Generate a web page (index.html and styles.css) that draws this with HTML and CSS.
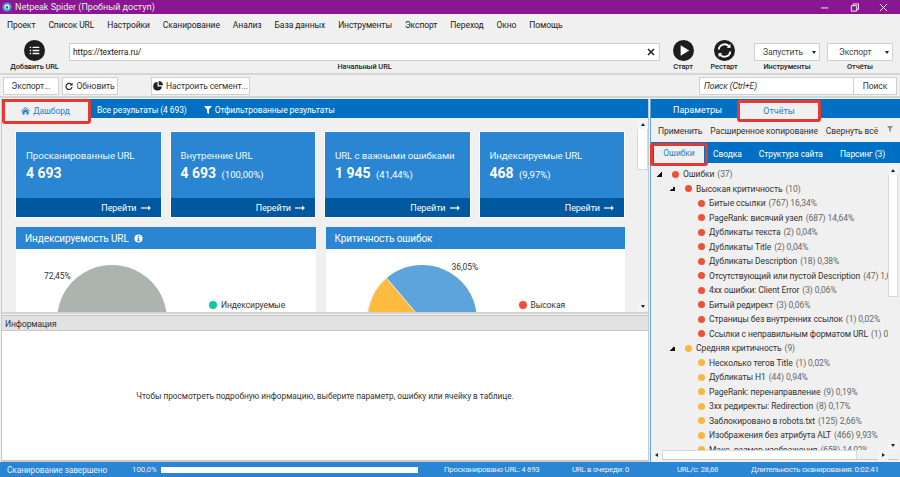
FILE: index.html
```html
<!DOCTYPE html>
<html lang="ru">
<head>
<meta charset="utf-8">
<title>Netpeak Spider</title>
<link rel="stylesheet" href="styles.css">
</head>
<body>
<div class="app">
  <header class="titlebar">
    <svg class="logo" viewBox="0 0 12 12"><circle cx="6" cy="6" r="5.5" fill="#35a5cf"/><circle cx="6" cy="6" r="3" fill="#fff"/><circle cx="6" cy="6.5" r="1.6" fill="#1c6f99"/></svg>
    <span class="title-text">Netpeak Spider (Пробный доступ)</span>
    <div class="win-btns">
      <svg class="win" viewBox="0 0 10 10"><path d="M0 5.5h8" stroke="#fff" fill="none"/></svg>
      <svg class="win" viewBox="0 0 10 10"><path d="M1.5 3h6v6h-6zM3.5 3V1h6v6h-2" stroke="#fff" fill="none"/></svg>
      <svg class="win" viewBox="0 0 10 10"><path d="M1 1l8 8M9 1l-8 8" stroke="#fff" fill="none"/></svg>
    </div>
  </header>
  <nav class="menu">
    <span>Проект</span><span>Список URL</span><span>Настройки</span><span>Сканирование</span><span>Анализ</span><span>База данных</span><span>Инструменты</span><span>Экспорт</span><span>Переход</span><span>Окно</span><span>Помощь</span>
  </nav>
  <section class="toolbar">
    <div class="tool tool-add">
      <svg class="round" viewBox="0 0 22 22"><circle cx="11" cy="11" r="11" fill="#1d1d1d"/><path d="M6 7h1.500v1.500H6zM9 7h7v1.500H9zM6 10.200h1.500v1.500H6zM9 10.200h7v1.500H9zM6 13.400h1.500v1.500H6zM9 13.400h7v1.500H9z" fill="#fff"/></svg>
      <span class="tool-label">Добавить URL</span>
    </div>
    <div class="tool tool-url">
      <div class="url-box"><span>https://texterra.ru/</span><svg class="clear" viewBox="0 0 8 8"><path d="M1 1l6 6M7 1l-6 6" stroke="#222" stroke-width="1.500" fill="none"/></svg></div>
      <span class="tool-label">Начальный URL</span>
    </div>
    <div class="tool tool-start">
      <svg class="round" viewBox="0 0 22 22"><circle cx="11" cy="11" r="11" fill="#1d1d1d"/><path d="M8 5.500l9 5.500-9 5.500z" fill="#fff"/></svg>
      <span class="tool-label">Старт</span>
    </div>
    <div class="tool tool-restart">
      <svg class="round" viewBox="0 0 22 22"><circle cx="11" cy="11" r="11" fill="#1d1d1d"/><path d="M5 10a6 6 0 0 1 10.500-3.500M17 12a6 6 0 0 1-10.500 3.500" stroke="#fff" stroke-width="2" fill="none"/><path d="M13.500 8.500l4-.5-.5-4zM8.500 13.500l-4 .5.500 4z" fill="#fff"/></svg>
      <span class="tool-label">Рестарт</span>
    </div>
    <div class="tool tool-drop">
      <div class="drop"><span>Запустить</span><i class="caret"></i></div>
      <span class="tool-label">Инструменты</span>
    </div>
    <div class="tool tool-drop tool-export">
      <div class="drop"><span>Экспорт</span><i class="caret"></i></div>
      <span class="tool-label">Отчёты</span>
    </div>
  </section>
  <section class="actions">
    <button class="btn btn-export">Экспорт...</button>
    <button class="btn btn-refresh"><svg class="ico" viewBox="0 0 10 10"><path d="M8.300 3.500A3.800 3.800 0 1 0 8.800 6.500" stroke="#222" stroke-width="1.500" fill="none"/><path d="M9.500 .8v3.700H5.800z" fill="#222"/></svg>Обновить</button>
    <button class="btn btn-segment"><svg class="ico ico-pie" viewBox="0 0 10 10"><path d="M4.500 1a4.300 4.300 0 1 0 4.300 4.500H4.500z" fill="#222"/><path d="M5.700 0a4.300 4.300 0 0 1 4.300 4.300H5.700z" fill="#222"/></svg>Настроить сегмент...</button>
    <div class="search"><span class="search-input">Поиск (Ctrl+E)</span><span class="search-btn">Поиск</span></div>
  </section>
  <main class="main">
    <section class="left">
      <div class="tabs">
        <span class="tab tab-dash"><svg class="home" viewBox="0 0 10 10"><path d="M5 1L0 5.200l.6.700L5 2.300l4.400 3.600.6-.7zM1.500 6v3.500h2.500V7h2v2.500h2.500V6L5 3.200z" fill="#2a7fc9"/></svg>Дашборд</span>
        <span class="tab tab-all">Все результаты (4 693)</span>
        <span class="tab tab-filter"><svg class="funnel" viewBox="0 0 8 8"><path d="M0 0h8L5 3.500V8L3 6.500v-3z" fill="#fff"/></svg>Отфильтрованные результаты</span>
      </div>
      <div class="dash-wrap">
        <div class="dash">
          <div class="cards">
            <article class="card">
              <div class="card-body"><div class="card-title">Просканированные URL</div><div class="card-num">4 693</div></div>
              <div class="card-foot">Перейти <svg class="arrow" viewBox="0 0 10 6"><path d="M0 3h8" stroke="#fff" stroke-width="1.200"/><path d="M7 .5L10 3 7 5.500z" fill="#fff"/></svg></div>
            </article>
            <article class="card">
              <div class="card-body"><div class="card-title">Внутренние URL</div><div class="card-num">4 693 <small>(100,00%)</small></div></div>
              <div class="card-foot">Перейти <svg class="arrow" viewBox="0 0 10 6"><path d="M0 3h8" stroke="#fff" stroke-width="1.200"/><path d="M7 .5L10 3 7 5.500z" fill="#fff"/></svg></div>
            </article>
            <article class="card">
              <div class="card-body"><div class="card-title">URL с важными ошибками</div><div class="card-num">1 945 <small>(41,44%)</small></div></div>
              <div class="card-foot">Перейти <svg class="arrow" viewBox="0 0 10 6"><path d="M0 3h8" stroke="#fff" stroke-width="1.200"/><path d="M7 .5L10 3 7 5.500z" fill="#fff"/></svg></div>
            </article>
            <article class="card">
              <div class="card-body"><div class="card-title">Индексируемые URL</div><div class="card-num">468 <small>(9,97%)</small></div></div>
              <div class="card-foot">Перейти <svg class="arrow" viewBox="0 0 10 6"><path d="M0 3h8" stroke="#fff" stroke-width="1.200"/><path d="M7 .5L10 3 7 5.500z" fill="#fff"/></svg></div>
            </article>
          </div>
          <div class="charts">
            <article class="chart">
              <div class="chart-head">Индексируемость URL <svg class="info-ico" viewBox="0 0 10 10"><circle cx="5" cy="5" r="4.500" fill="#fff"/><path d="M4.200 2h1.600v1.400H4.200zM3.800 4.200h2v2.800h.6v1H3.700v-1h.6V5.200h-.5z" fill="#2a86d2"/></svg></div>
              <div class="chart-body">
                <div class="pie-area">
                  <span class="pct pct-a">72,45%</span>
                  <svg class="pie pie-a" viewBox="0 0 110 110"><circle cx="55" cy="55" r="55" fill="#adb4b0"/></svg>
                </div>
                <div class="legend"><i class="dot dot-green"></i>Индексируемые</div>
              </div>
            </article>
            <article class="chart">
              <div class="chart-head">Критичность ошибок</div>
              <div class="chart-body">
                <div class="pie-area">
                  <span class="pct pct-b">36,05%</span>
                  <svg class="pie pie-b" viewBox="0 0 110 110"><circle cx="55" cy="55" r="55" fill="#5da3dc"/><path d="M55 55L19.500 13A55 55 0 0 0 0 55v55h55z" fill="#ffbb40" stroke="#fff" stroke-width=".8"/></svg>
                </div>
                <div class="legend"><i class="dot dot-red"></i>Высокая</div>
              </div>
            </article>
          </div>
        </div>
        <div class="vscroll vscroll-dash"><span class="sb-btn"><i class="tri-up"></i></span><span class="sb-thumb"></span><span class="sb-fill"></span><span class="sb-btn"><i class="tri-down"></i></span></div>
      </div>
      <div class="info">
        <div class="info-head">Информация</div>
        <div class="info-body">Чтобы просмотреть подробную информацию, выберите параметр, ошибку или ячейку в таблице.</div>
      </div>
    </section>
    <aside class="right">
      <div class="rtabs">
        <span class="rtab">Параметры</span>
        <span class="rtab rtab-active">Отчёты</span>
      </div>
      <div class="rtools">
        <span>Применить</span><span>Расширенное копирование</span><span>Свернуть всё</span>
        <svg class="rfunnel" viewBox="0 0 8 8"><path d="M0 0h8L5 3.500V8L3 6.500v-3z" fill="#8a8a8a"/></svg>
      </div>
      <div class="subtabs">
        <span class="subtab subtab-active">Ошибки</span>
        <span class="subtab">Сводка</span>
        <span class="subtab">Структура сайта</span>
        <span class="subtab">Парсинг (3)</span>
      </div>
      <div class="tree-wrap">
        <div class="tree-main">
          <ul class="tree">
            <li class="lv0"><i class="exp"></i><i class="dot dot-red"></i>Ошибки <em>(37)</em></li>
            <li class="lv1"><i class="exp"></i><i class="dot dot-red"></i>Высокая критичность <em>(10)</em></li>
            <li class="lv2"><i class="dot dot-red"></i>Битые ссылки <em>(767) 16,34%</em></li>
            <li class="lv2"><i class="dot dot-red"></i>PageRank: висячий узел <em>(687) 14,64%</em></li>
            <li class="lv2"><i class="dot dot-red"></i>Дубликаты текста <em>(2) 0,04%</em></li>
            <li class="lv2"><i class="dot dot-red"></i>Дубликаты Title <em>(2) 0,04%</em></li>
            <li class="lv2"><i class="dot dot-red"></i>Дубликаты Description <em>(18) 0,38%</em></li>
            <li class="lv2"><i class="dot dot-red"></i>Отсутствующий или пустой Description <em>(47) 1,00%</em></li>
            <li class="lv2"><i class="dot dot-red"></i>4xx ошибки: Client Error <em>(3) 0,06%</em></li>
            <li class="lv2"><i class="dot dot-red"></i>Битый редирект <em>(3) 0,06%</em></li>
            <li class="lv2"><i class="dot dot-red"></i>Страницы без внутренних ссылок <em>(1) 0,02%</em></li>
            <li class="lv2"><i class="dot dot-red"></i>Ссылки с неправильным форматом URL <em>(1) 0,02%</em></li>
            <li class="lv1"><i class="exp"></i><i class="dot dot-amber"></i>Средняя критичность <em>(9)</em></li>
            <li class="lv2"><i class="dot dot-amber"></i>Несколько тегов Title <em>(1) 0,02%</em></li>
            <li class="lv2"><i class="dot dot-amber"></i>Дубликаты H1 <em>(44) 0,94%</em></li>
            <li class="lv2"><i class="dot dot-amber"></i>PageRank: перенаправление <em>(9) 0,19%</em></li>
            <li class="lv2"><i class="dot dot-amber"></i>3xx редиректы: Redirection <em>(8) 0,17%</em></li>
            <li class="lv2"><i class="dot dot-amber"></i>Заблокировано в robots.txt <em>(125) 2,66%</em></li>
            <li class="lv2"><i class="dot dot-amber"></i>Изображения без атрибута ALT <em>(466) 9,93%</em></li>
            <li class="lv2"><i class="dot dot-amber"></i>Макс. размер изображения <em>(658) 14,02%</em></li>
          </ul>
          <div class="vscroll vscroll-tree"><span class="sb-btn"><i class="tri-up"></i></span><span class="sb-thumb sb-thumb-tree"></span><span class="sb-fill"></span><span class="sb-btn"><i class="tri-down"></i></span></div>
        </div>
        <div class="hscroll"><span class="sb-btn sb-left"><i class="tri-left"></i></span><span class="hthumb"></span><span class="sb-btn sb-right"><i class="tri-right"></i></span><span class="corner"></span></div>
      </div>
    </aside>
  </main>
  <footer class="status">
    <span class="st st-1">Сканирование завершено</span>
    <span class="st st-2">100,0%</span>
    <span class="st st-3"><span class="bar"></span></span>
    <span class="st st-4">Просканировано URL: 4 693</span>
    <span class="st st-5">URL в очереди: 0</span>
    <span class="st st-6">URL/с: 28,68</span>
    <span class="st st-7">Длительность сканирования: 0:02:41</span>
  </footer>
  <span class="mark mark-dash"></span>
  <span class="mark mark-rep"></span>
  <span class="mark mark-err"></span>
</div>
</body>
</html>
```

FILE: styles.css
```css
* { box-sizing: border-box; }
html, body { margin: 0; padding: 0; }
body { font-family: Roboto, "Noto Sans", sans-serif; font-size: 8.500px; letter-spacing: -0.08px; color: #333; background: #f0f0f0; }
.app { position: relative; width: 900px; height: 477px; overflow: hidden; display: flex; flex-direction: column; background: #f0f0f0; }

.titlebar { height: 14px; background: #8a1692; display: flex; align-items: center; padding-left: 2px; color: #eee; flex: none; }
.logo { width: 10px; height: 10px; margin-right: 3px; }
.title-text { font-size: 9px; letter-spacing: 0; }
.win-btns { margin-left: auto; display: flex; gap: 20px; padding-right: 12px; }
.win { width: 9px; height: 9px; }

.menu { height: 21px; flex: none; display: flex; gap: 13px; align-items: center; padding-left: 7px; color: #222; }

.toolbar { height: 40px; flex: none; display: flex; border-bottom: 2px solid #d4d4d4; }
.tool { display: flex; flex-direction: column; align-items: center; justify-content: space-between; padding-bottom: 1px; }
.tool-label { font-size: 7.400px; font-weight: 500; color: #222; line-height: 10px; }
.round { width: 21px; height: 21px; margin-top: 5px; }
.tool-add { width: 69px; }
.tool-url { width: 591px; }
.url-box { width: 591px; height: 18px; margin-top: 8px; background: #fff; border: 1px solid #d0d0d0; display: flex; align-items: center; justify-content: space-between; padding: 0 4px 0 3px; color: #222; }
.clear { width: 8px; height: 8px; }
.tool-start { width: 46px; }
.tool-restart { width: 36px; }
.tool-drop { width: 66px; margin-left: 12px; }
.tool-export { margin-left: 7px; }
.drop { width: 66px; height: 18px; margin-top: 8px; background: #fff; border: 1px solid #d0d0d0; display: flex; align-items: center; justify-content: space-between; padding: 0 3px 0 8px; color: #444; }
.tool-export .drop { padding-left: 11px; }
.caret { width: 0; height: 0; border-left: 2.500px solid transparent; border-right: 2.500px solid transparent; border-top: 3px solid #222; }

.actions { height: 23px; flex: none; display: flex; align-items: center; padding: 1px 3px 0; border-bottom: 2px solid #d4d4d4; gap: 3px; }
.btn { height: 18px; padding: 0; background: #fff; border: 1px solid #d0d0d0; font: inherit; letter-spacing: inherit; color: #333; display: flex; align-items: center; justify-content: center; white-space: nowrap; }
.btn-export { width: 56px; }
.btn-refresh { width: 56px; }
.btn-segment { width: 99px; margin-left: 30px; }
.ico { width: 8px; height: 8px; margin-right: 3px; }
.ico-pie { width: 10px; height: 10px; }
.search { margin-left: auto; width: 198px; height: 18px; display: flex; background: #fff; border: 1px solid #d0d0d0; }
.search-input { flex: 1; font-style: italic; padding-left: 4px; line-height: 16px; color: #333; }
.search-btn { width: 43px; border-left: 1px solid #d0d0d0; text-align: center; line-height: 16px; }

.main { flex: 1; min-height: 0; display: flex; }
.left { width: 648px; flex: none; border-left: 1px solid #c8c8c8; border-right: 1px solid #c8c8c8; display: flex; flex-direction: column; margin-left: 1px; margin-top: 1px; }
.tabs { height: 19px; flex: none; background: #0070c4; display: flex; align-items: center; color: #fff; }
.tab { display: flex; align-items: center; padding-top: 3px; }
.tab-dash { width: 85px; height: 18px; margin: 1px 0 0 1px; background: #f0f0f0; color: #2a7fc9; justify-content: center; }
.tab-all { margin-left: 9px; }
.tab-filter { margin-left: 17px; }
.home { width: 9px; height: 9px; margin-right: 3px; }
.funnel { width: 8px; height: 8px; margin-right: 3px; }

.dash-wrap { height: 196px; flex: none; display: flex; overflow: hidden; border-bottom: 2px solid #d4d4d4; }
.dash { flex: 1; min-width: 0; padding: 14px 0 0 14px; overflow: hidden; }
.cards { display: flex; gap: 10px; }
.card { width: 144.500px; height: 85px; flex: none; background: #2a86d2; color: #fff; display: flex; flex-direction: column; box-shadow: 0 0 0 1px #fff; }
.card-body { flex: 1; padding: 17px 10px 0; }
.card-title { font-size: 9.700px; line-height: 13px; color: #eef6fc; white-space: nowrap; }
.card-num { font-size: 14px; font-weight: 700; line-height: 20px; margin-top: 1px; letter-spacing: 0; }
.card-num small { font-size: 9.500px; font-weight: 400; margin-left: 2px; }
.card-foot { height: 19px; background: #00589f; display: flex; align-items: center; justify-content: flex-end; gap: 4px; padding-right: 10px; font-size: 9px; }
.arrow { width: 10px; height: 6px; }
.charts { display: flex; gap: 10px; margin-top: 10px; }
.chart { width: 299.500px; height: 100px; flex: none; background: #fff; }
.chart-head { height: 22px; background: #2a86d2; color: #fff; font-size: 10px; display: flex; align-items: center; padding-left: 9px; gap: 5px; }
.info-ico { width: 9px; height: 9px; }
.chart-body { height: 78px; display: flex; }
.pie-area { width: 193px; position: relative; }
.pie { position: absolute; top: 16px; width: 110px; height: 110px; }
.pie-a { left: 41px; }
.pie-b { left: 41px; }
.pct { position: absolute; color: #333; line-height: 10px; }
.pct-a { left: 28px; top: 22px; }
.pct-b { left: 126px; top: 13px; }
.legend { display: flex; align-items: center; gap: 4px; color: #333; height: 12px; margin-top: 50px; }
.dot { width: 8px; height: 8px; border-radius: 50%; display: inline-block; flex: none; }
.dot-green { background: #0fc8a0; }
.dot-red { background: #f05036; }
.dot-amber { background: #f9b740; }

.vscroll { flex: none; display: flex; flex-direction: column; background: #f0f0f0; }
.vscroll-dash { width: 11px; margin: 1px 0; }
.sb-btn { height: 10px; width: 11px; flex: none; background: #f4f4f4; display: flex; align-items: center; justify-content: center; }
.sb-thumb { height: 41px; flex: none; background: #fff; border: 1px solid #d8d8d8; border-width: 0 1px 1px 1px; }
.sb-fill { flex: 1; }
.tri-up, .tri-down, .tri-left, .tri-right { width: 0; height: 0; display: block; }
.tri-up { border-left: 2.500px solid transparent; border-right: 2.500px solid transparent; border-bottom: 3px solid #222; }
.tri-down { border-left: 2.500px solid transparent; border-right: 2.500px solid transparent; border-top: 3px solid #222; }
.tri-left { border-top: 2.500px solid transparent; border-bottom: 2.500px solid transparent; border-right: 3px solid #222; }
.tri-right { border-top: 2.500px solid transparent; border-bottom: 2.500px solid transparent; border-left: 3px solid #222; }

.info { flex: 1; min-height: 0; display: flex; flex-direction: column; margin-top: 1px; border-bottom: 2px solid #c8c8c8; }
.info-head { height: 15px; flex: none; background: #e2e2e2; line-height: 16px; padding-left: 3px; color: #333; border-top: 1px solid #c8c8c8; }
.info-body { flex: 1; background: #fff; display: flex; align-items: center; justify-content: center; font-size: 8.300px; letter-spacing: -0.03px; color: #333; border-top: 1px solid #c8c8c8; }

.right { flex: 1; min-width: 0; margin: 1px 0 0 1px; display: flex; flex-direction: column; border-left: 1px solid #5da3dc; }
.rtabs { height: 19px; flex: none; background: #0070c4; display: flex; align-items: center; color: #fff; padding-left: 22px; font-size: 9px; letter-spacing: 0; }
.rtab { width: 66px; padding-top: 3px; }
.rtab-active { width: 80px; height: 18px; margin-top: 1px; background: #f0f0f0; color: #2a7fc9; display: flex; align-items: center; justify-content: center; }
.rtools { height: 24px; flex: none; display: flex; align-items: center; gap: 8px; padding: 2px 0 0 7px; color: #333; white-space: nowrap; }
.rfunnel { width: 6px; height: 6px; margin: 0 0 4px 1px; }
.subtabs { height: 21px; flex: none; background: #0070c4; display: flex; align-items: center; color: #fff; gap: 17px; padding-top: 2px; white-space: nowrap; }
.subtab-active { width: 50px; height: 20px; margin: -1px -8px 0 3px; background: #f0f0f0; color: #2a7fc9; display: flex; align-items: center; justify-content: center; }

.tree-wrap { flex: 1; min-height: 0; display: flex; flex-direction: column; margin: 0 2px 2px 0; }
.tree-main { flex: 1; min-height: 0; display: flex; overflow: hidden; }
.tree { list-style: none; margin: 0; padding: 4px 0 0; flex: 1; min-width: 0; overflow: hidden; background: #f0f0f0; }
.tree li { height: 14.500px; display: flex; align-items: center; white-space: nowrap; color: #333; overflow: hidden; }
.tree em { font-style: normal; color: #666; margin-left: 3px; }
.tree .dot { margin-right: 4px; width: 7px; height: 7px; }
.lv0 { padding-left: 6px; }
.lv1 { padding-left: 19px; }
.lv2 { padding-left: 47px; }
.exp { width: 5px; height: 5px; flex: none; margin-right: 10px; background: linear-gradient(135deg, transparent 50%, #111 50%); }
.vscroll-tree { width: 10px; margin-top: 2px; }
.vscroll-tree .sb-btn { width: 10px; }
.sb-thumb-tree { height: 122px; }
.hscroll { height: 10px; flex: none; display: flex; background: #f0f0f0; border-bottom: 1px solid #c8c8c8; }
.hthumb { width: 195px; background: #fff; border: 1px solid #d8d8d8; border-width: 1px 1px 0; }
.sb-right { margin-left: 21px; width: 10px; }
.corner { flex: 1; }

.status { height: 15px; flex: none; background: #2a86d2; color: #e8f2fb; font-size: 7.800px; letter-spacing: -0.25px; display: flex; align-items: center; padding-left: 7px; white-space: nowrap; }
.st { flex: none; display: flex; align-items: center; }
.st-1 { width: 125px; font-size: 8.300px; letter-spacing: -0.08px; }
.st-2 { width: 29px; letter-spacing: 0; }
.st-3 { width: 283px; }
.st-4 { width: 128px; }
.st-5 { width: 105px; }
.st-6 { width: 74px; }
.bar { width: 257px; height: 6px; background: #fff; }

.mark { position: absolute; border: 3px solid #e53935; border-radius: 3px; background: transparent; }
.mark-dash { left: 2px; top: 99px; width: 89px; height: 25px; }
.mark-rep { left: 737px; top: 100px; width: 84px; height: 22px; }
.mark-err { left: 650px; top: 143px; width: 58px; height: 23px; }
```
